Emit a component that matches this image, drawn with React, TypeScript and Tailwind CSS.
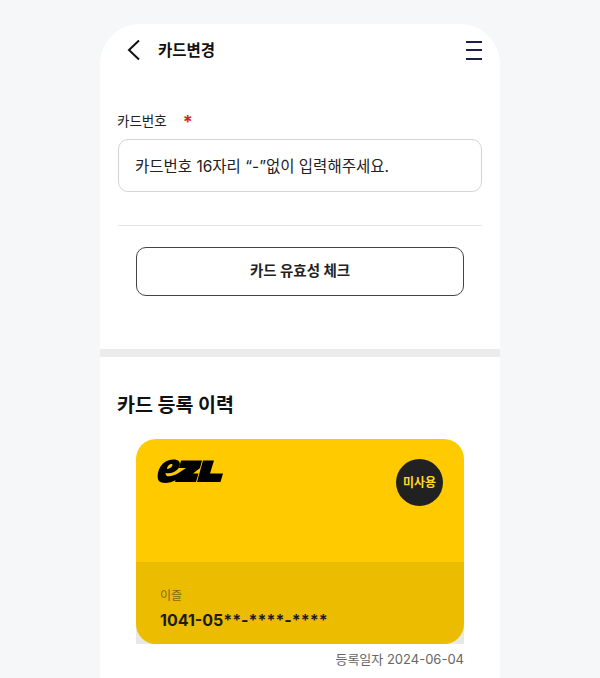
const font = { fontFamily: 'Inter, "Noto Sans CJK KR", sans-serif' };

function Logo() {
  return (
    <svg width="66" height="24" viewBox="0 0 66 24" fill="#000">
      <path d="M1.500 21.500C-0.500 17.500 1 9 6 4.500C11 0 19.500 -0.500 22 2.500C24.500 6 21.500 11 17 13C14 14.300 11 14.500 8.500 14C8.500 16.500 10 17.500 12 17.300C15 17 18 16 21 14.500L19 21C13 24.500 3.500 25 1.500 21.500ZM10 10C13 9.500 15.500 7.500 15.500 6C15.500 4.500 13 5 11.500 6.500C10.500 7.500 10 9 10 10Z" fillRule="evenodd" />
      <path d="M24 1.500H45L43 9L36 14.500H41.500L39 23H18L20 15L29 9H22Z" />
      <path d="M46 1.500H57L53 14.500H66L63.500 23H40Z" />
    </svg>
  );
}

export default function App() {
  return (
    <div className="h-[678px] overflow-hidden bg-[#f6f7f9] pt-6" style={font}>
      <div className="mx-auto h-[654px] w-[400px] rounded-t-[40px] bg-white">
        <header className="flex h-[52px] items-center pl-[26px] pr-[18px]">
          <svg width="16" height="22" viewBox="0 0 16 22" fill="none" stroke="#111" strokeWidth="2">
            <path d="M13 1.500L3 11L13 20.500" />
          </svg>
          <h1 className="ml-[16px] flex-1 pt-[2px] text-[15.500px] font-bold text-[#111]">카드변경</h1>
          <div className="flex h-[19px] w-[16px] flex-col justify-between">
            <div className="h-[2px] bg-[#1a1f4b]" />
            <div className="h-[2px] bg-[#1a1f4b]" />
            <div className="h-[2px] bg-[#1a1f4b]" />
          </div>
        </header>
        <section className="px-[18px] pt-[33px]">
          <div className="-ml-px flex h-[22px] items-center pt-[2px] text-[13.500px] text-[#222]">
            카드번호
            <span className="ml-[16px] text-[18px] font-bold text-[#f01818]">*</span>
          </div>
          <div className="mt-[8px] flex h-[53px] items-center rounded-[10px] border border-[#d4d4d4] px-[16px] pt-[2px] text-[15.500px] text-[#222]">
            카드번호 16자리 “-”없이 입력해주세요.
          </div>
          <div className="mt-[33px] h-px bg-[#e6e6e6]" />
          <button className="mx-auto mt-[21px] flex h-[49px] w-[328px] items-center justify-center rounded-[10px] border border-[#444] bg-white pb-[2px] text-[14.500px] font-bold text-[#222]">
            카드 유효성 체크
          </button>
        </section>
        <div className="mt-[53px] h-2 bg-[#ebebeb]" />
        <section className="px-[18px] pt-[34px]">
          <h2 className="-ml-px text-[19.500px] font-bold leading-[28px] text-[#111]">카드 등록 이력</h2>
          <div className="mx-auto mt-[20px] w-[328px]">
            <div className="flex h-[123px] items-start justify-between rounded-t-[20px] bg-[#ffcb00] pl-[21px] pr-[21px] pt-[20px]">
              <Logo />
              <div className="flex h-[47px] w-[47px] items-center justify-center rounded-full bg-[#212121] text-[12px] font-bold text-[#ffd91f]">
                미사용
              </div>
            </div>
            <div className="bg-[#e8e8e8]">
              <div className="h-[82px] rounded-b-[20px] bg-[#ecbc00] px-[24px] pt-[26px]">
                <div className="text-[12px] leading-[16px] text-[#7d6a1c]">이즐</div>
                <div className="mt-[5px] text-[16px] font-bold leading-[22px] text-[#1c1c1c]">1041-05**-****-****</div>
              </div>
            </div>
          </div>
          <div className="mx-auto mt-[5px] w-[328px] text-right text-[13px] leading-[20px] text-[#666]">등록일자 2024-06-04</div>
        </section>
      </div>
    </div>
  );
}
